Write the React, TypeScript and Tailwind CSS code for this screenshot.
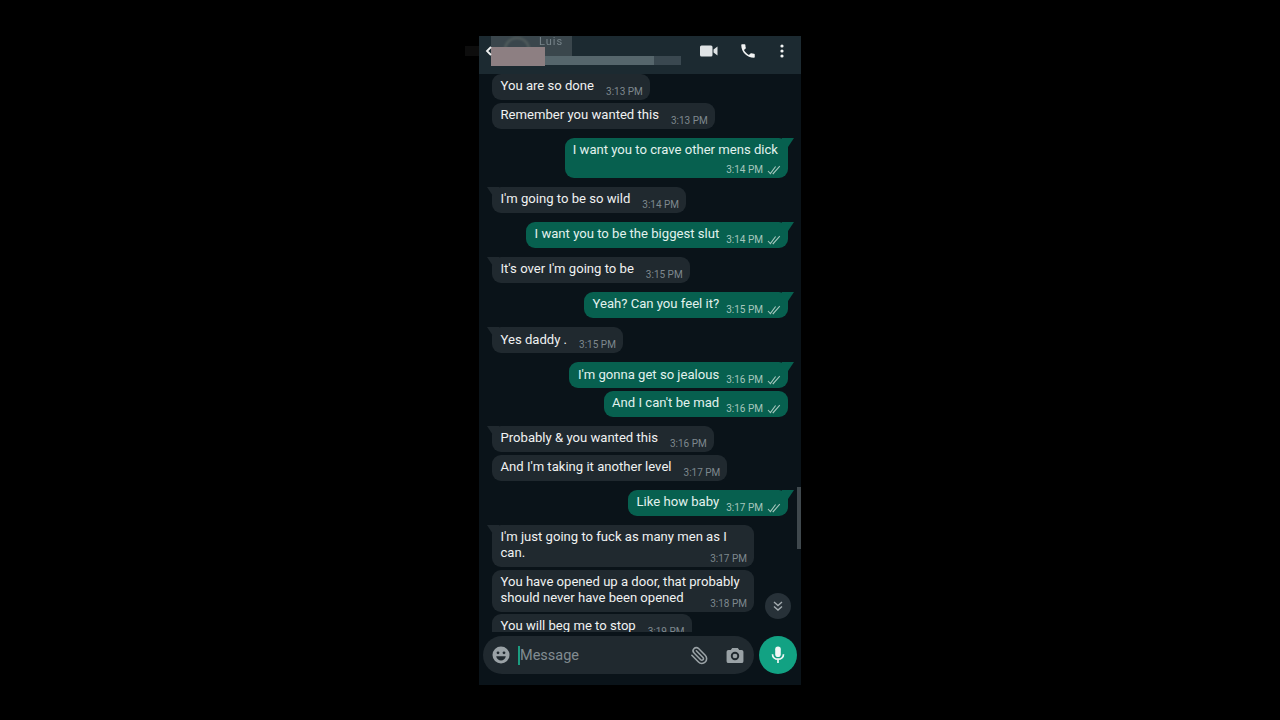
import React from "react";
import { Paperclip } from "lucide-react";

const Ticks = () => (
  <svg width="14" height="10" viewBox="0 0 14 10" fill="none" stroke="#a6c6bd" strokeWidth="1.100" className="ml-[4px]">
    <path d="M1 6l2.400 2.600L8.600 1.500" />
    <path d="M5.600 8.400l.5.3L12.800 1.200" />
  </svg>
);

type P = { text: string; time: string; out?: boolean; tail?: boolean; mt: string; tm?: string };

function Bubble({ text, time, out, tail, mt, tm = "mt-[3px]" }: P) {
  return (
    <div className={`${mt} flex ${out ? "justify-end pr-[13px]" : "justify-start pl-[13px]"}`}>
      <div className={`relative flex h-[26px] items-start rounded-[9px] ${out ? "bg-[#07604f]" : "bg-[#20292f]"} pl-[8.500px] pr-[7px]`}>
        {tail && out && <span className="absolute right-[-6px] top-0 h-[9px] w-[12px] bg-[#07604f] [clip-path:polygon(0_0,100%_0,50%_100%,0_100%)]" />}
        {tail && !out && <span className="absolute left-[-5px] top-0 h-[9px] w-[12px] bg-[#20292f] [clip-path:polygon(0_0,100%_0,100%_100%,50%_100%)]" />}
        <span className={`${tm} text-[13.100px] leading-[18px] whitespace-nowrap ${out ? "text-[#e2f2ee]" : "text-[#f0f2f2]"}`}>{text}</span>
        <span className={`${out ? "ml-[7px]" : "ml-[12px]"} mt-[12px] flex items-center text-[10px] leading-[12px] whitespace-nowrap ${out ? "text-[#a6c6bd]" : "text-[#7e888e]"}`}>
          {time}
          {out && <Ticks />}
        </span>
      </div>
    </div>
  );
}

function Tall({ lines, time, mt, tail }: { lines: string[]; time: string; mt: string; tail?: boolean }) {
  return (
    <div className={`${mt} flex justify-start pl-[13px]`}>
      <div className="relative h-[42px] w-[262px] rounded-[9px] bg-[#20292f] pl-[8.500px] pt-[4px]">
        {tail && <span className="absolute left-[-5px] top-0 h-[9px] w-[12px] bg-[#20292f] [clip-path:polygon(0_0,100%_0,100%_100%,50%_100%)]" />}
        {lines.map((l) => (
          <div key={l} className="text-[13.100px] leading-[16px] whitespace-nowrap text-[#f0f2f2]">{l}</div>
        ))}
        <span className="absolute bottom-[2px] right-[7px] text-[10px] leading-[12px] text-[#7e888e]">{time}</span>
      </div>
    </div>
  );
}

export default function App() {
  return (
    <div className="flex h-[720px] w-[1280px] justify-center bg-black pt-[36px] font-['Roboto',sans-serif]">
      <div className="relative flex h-[649px] w-[322px] flex-col bg-[#0a1319]">
        {/* faint band left of the phone */}
        <div className="absolute left-[-14px] top-[10px] h-[10px] w-[14px] bg-[#0d0d0d]" />

        {/* header */}
        <div className="relative z-10 flex h-[38px] shrink-0 items-center justify-end bg-[#1c2a31] pb-[8px] pr-[17px]">
          <div className="absolute left-[12px] top-0 h-[20px] w-[81px] overflow-hidden bg-[#3a464c]">
            <div className="absolute left-[13px] top-[1px] h-[26px] w-[26px] rounded-full border-2 border-[#55605f] blur-[1px]" />
            <span className="absolute left-[48px] top-[0px] text-[11px] leading-[12px] tracking-[1px] text-[#77848a] blur-[0.5px]">Luis</span>
          </div>
          <div className="absolute left-[12px] top-[11px] h-[19px] w-[54px] bg-[#8d7f82] blur-[0.5px]" />
          <div className="absolute left-[66px] top-[20px] h-[9px] w-[109px] bg-[#56666c] blur-[0.5px]" />
          <div className="absolute left-[175px] top-[20px] h-[9px] w-[27px] bg-[#3a4850] blur-[0.5px]" />
          <svg className="absolute left-[6px] top-[10px]" width="8" height="10" viewBox="0 0 8 10" fill="none" stroke="#eef0f0" strokeWidth="1.800">
            <path d="M6 1L2 5l4 4" />
          </svg>
          <svg width="18" height="12" viewBox="0 0 18 12">
            <rect x="0" y="0.500" width="12.500" height="11" rx="1.500" fill="#dfe3e5" />
            <path d="M13.500 4.500L17.500 1.500V10.500L13.500 7.500Z" fill="#dfe3e5" />
          </svg>
          <svg width="18" height="18" viewBox="0 0 24 24" fill="#f2f4f4" className="ml-[21px]">
            <path d="M6.600 10.800c1.400 2.800 3.800 5.100 6.600 6.600l2.200-2.200c.3-.3.7-.4 1-.2 1.100.4 2.300.6 3.600.6.6 0 1 .4 1 1V20c0 .6-.4 1-1 1C10.600 21 3 13.400 3 4c0-.6.4-1 1-1h3.500c.6 0 1 .4 1 1 0 1.300.2 2.500.6 3.600.1.300 0 .7-.2 1z" />
          </svg>
          <svg width="4" height="14" viewBox="0 0 4 14" fill="#f2f4f4" className="ml-[23px]">
            <circle cx="2" cy="2" r="1.600" />
            <circle cx="2" cy="7" r="1.600" />
            <circle cx="2" cy="12" r="1.600" />
          </svg>
        </div>

        {/* messages */}
        <div className="h-[558px] shrink-0 overflow-hidden">
          <Bubble mt="mt-0" text="You are so done" time="3:13 PM" />
          <Bubble mt="mt-[3px]" text="Remember you wanted this" time="3:13 PM" />
          <div className="mt-[9px] flex justify-end pr-[13px]">
            <div className="relative h-[40px] rounded-[9px] bg-[#07604f] pl-[8px] pr-[10px] pt-[4px]">
              <span className="absolute right-[-6px] top-0 h-[9px] w-[12px] bg-[#07604f] [clip-path:polygon(0_0,100%_0,50%_100%,0_100%)]" />
              <div className="text-[13.100px] leading-[16px] whitespace-nowrap text-[#e2f2ee]">I want you to crave other mens dick</div>
              <div className="mr-[-3px] mt-[6px] flex items-center justify-end text-[10px] leading-[12px] text-[#a6c6bd]">3:14 PM<Ticks /></div>
            </div>
          </div>
          <Bubble mt="mt-[9px]" tail text="I'm going to be so wild" time="3:14 PM" />
          <Bubble mt="mt-[9px]" out tail text="I want you to be the biggest slut" time="3:14 PM" />
          <Bubble mt="mt-[9px]" tail text="It's over I'm going to be" time="3:15 PM" />
          <Bubble mt="mt-[9px]" out tail text="Yeah? Can you feel it?" time="3:15 PM" />
          <Bubble mt="mt-[9px]" tail text="Yes daddy ." time="3:15 PM" tm="mt-[4px]" />
          <Bubble mt="mt-[9px]" out tail text="I'm gonna get so jealous" time="3:16 PM" tm="mt-[4px]" />
          <Bubble mt="mt-[3px]" out text="And I can't be mad" time="3:16 PM" />
          <Bubble mt="mt-[9px]" tail text="Probably & you wanted this" time="3:16 PM" />
          <Bubble mt="mt-[3px]" text="And I'm taking it another level" time="3:17 PM" />
          <Bubble mt="mt-[9px]" out tail text="Like how baby" time="3:17 PM" />
          <Tall mt="mt-[9px]" tail lines={["I'm just going to fuck as many men as I", "can."]} time="3:17 PM" />
          <Tall mt="mt-[3px]" lines={["You have opened up a door, that probably", "should never have been opened"]} time="3:18 PM" />
          <Bubble mt="mt-[2px]" text="You will beg me to stop" time="3:19 PM" />
        </div>

        {/* composer */}
        <div className="mt-[4px] flex items-center pl-[4px]">
          <div className="flex h-[38px] w-[271px] items-center rounded-full bg-[#20292f] pl-[9px] pr-[10px]">
            <svg width="18" height="18" viewBox="0 0 18 18">
              <circle cx="9" cy="9" r="8.500" fill="#9aa2a6" />
              <circle cx="6" cy="6.800" r="1.400" fill="#20292f" />
              <circle cx="12" cy="6.800" r="1.400" fill="#20292f" />
              <path d="M4.200 10.200h9.600c-.4 2.600-2.400 4.300-4.800 4.300s-4.400-1.700-4.800-4.300z" fill="#20292f" />
            </svg>
            <span className="ml-[8px] h-[19px] w-[2px] bg-[#1b9c80]" />
            <span className="pt-[2px] text-[14.500px] leading-[20px] text-[#828c91]">Message</span>
            <Paperclip size={19} color="#9aa2a6" strokeWidth={2} className="ml-auto -scale-x-100" />
            <svg width="18" height="15" viewBox="0 0 18 16" className="ml-[17px]">
              <path fillRule="evenodd" fill="#9aa2a6" d="M6 0h6l1.500 2H16a2 2 0 0 1 2 2v10a2 2 0 0 1-2 2H2a2 2 0 0 1-2-2V4a2 2 0 0 1 2-2h2.500zM9 4a4.500 4.500 0 1 0 0 9 4.500 4.500 0 0 0 0-9zm0 2a2.500 2.500 0 1 1 0 5 2.500 2.500 0 0 1 0-5z" />
            </svg>
          </div>
          <div className="ml-[5px] flex h-[38px] w-[38px] items-center justify-center rounded-full bg-[#12a283]">
            <svg width="14" height="18" viewBox="0 0 14 18" fill="none">
              <rect x="4.200" y="0.500" width="5.600" height="10.500" rx="2.800" fill="#f2f7f6" />
              <path d="M1.500 8.200c0 3 2.400 5 5.500 5s5.500-2 5.500-5M7 13.200V17" stroke="#f2f7f6" strokeWidth="1.700" />
            </svg>
          </div>
        </div>

        {/* overlays */}
        <div className="absolute right-0 top-[451px] h-[62px] w-[4px] bg-[#3f484d]" />
        <div className="absolute left-[286px] top-[557px] flex h-[26px] w-[26px] items-center justify-center rounded-full bg-[#273138]">
          <svg width="12" height="12" viewBox="0 0 12 12" fill="none" stroke="#a4acb0" strokeWidth="1.400">
            <path d="M2 2l4 3.500L10 2M2 6.500L6 10l4-3.500" />
          </svg>
        </div>
      </div>
    </div>
  );
}
